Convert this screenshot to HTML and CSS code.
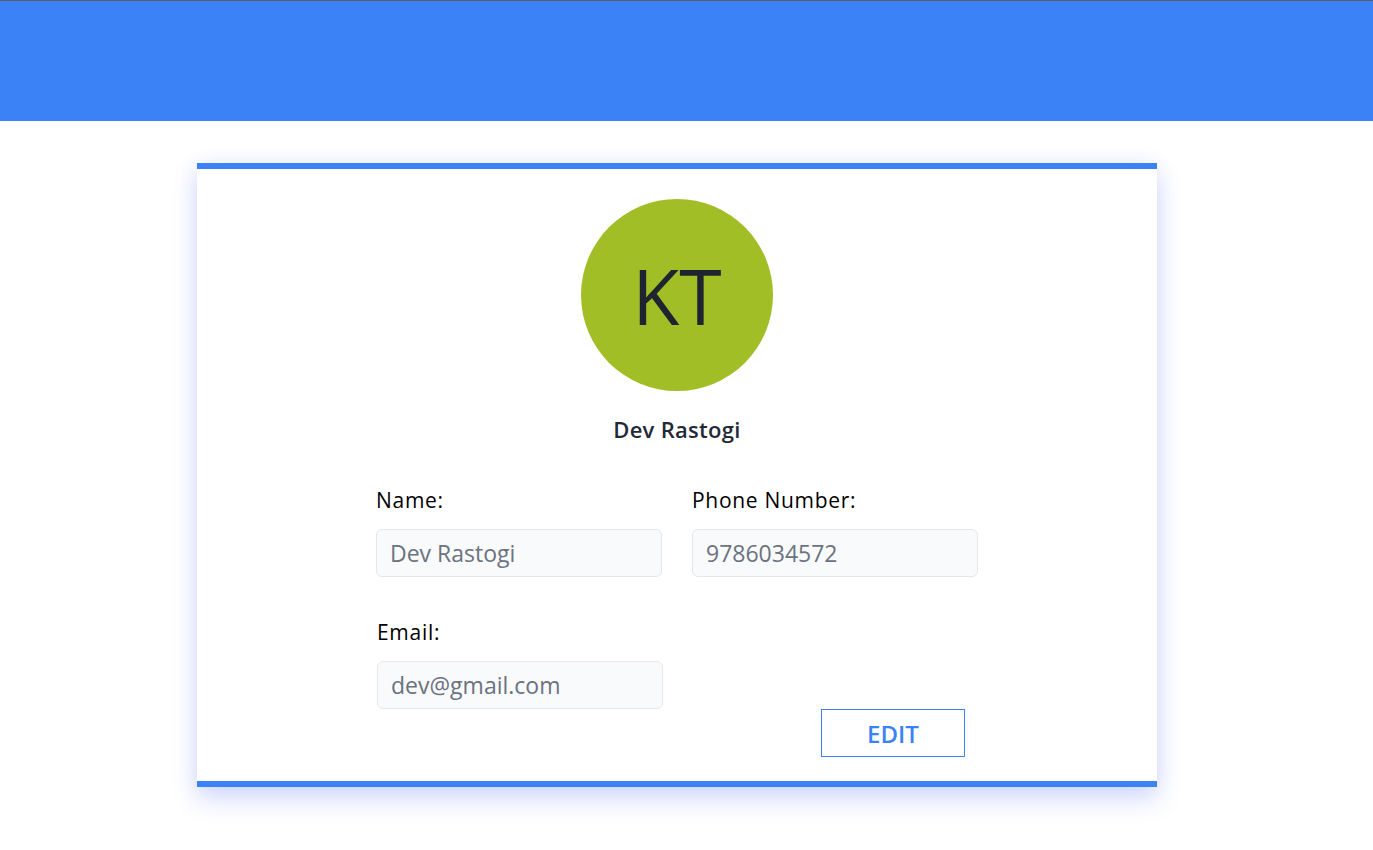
FILE: index.html
```html
<!DOCTYPE html>
<html lang="en">
<head>
<meta charset="utf-8">
<title>Profile</title>
<link rel="stylesheet" href="styles.css">
</head>
<body>
<header class="topbar"></header>
<main class="page">
  <section class="card">
    <div class="avatar">KT</div>
    <h2 class="user-name">Dev Rastogi</h2>
    <form class="form">
      <div class="field">
        <label class="label">Name:</label>
        <input class="input" type="text" placeholder="Dev Rastogi">
      </div>
      <div class="field">
        <label class="label">Phone Number:</label>
        <input class="input" type="text" placeholder="9786034572">
      </div>
      <div class="field field-email">
        <label class="label">Email:</label>
        <input class="input" type="text" placeholder="dev@gmail.com">
      </div>
    </form>
    <div class="actions">
      <button class="edit-btn" type="button">EDIT</button>
    </div>
  </section>
</main>
</body>
</html>
```

FILE: styles.css
```css
* { box-sizing: border-box; }

html, body {
  margin: 0;
  padding: 0;
  background: #ffffff;
  font-family: "Open Sans", "Noto Sans", "Liberation Sans", sans-serif;
  color: #000;
}

.topbar {
  height: 121px;
  background: #3b82f6;
  border-top: 1px solid #5b5e66;
}

.page {
  display: flex;
  justify-content: center;
  padding: 42px 19px 60px 0;
}

.card {
  width: 960px;
  background: #fff;
  border-top: 6px solid #3b82f6;
  border-bottom: 6px solid #3b82f6;
  box-shadow: 0 12px 24px rgba(70, 90, 240, 0.22), 0 0 18px rgba(70, 90, 240, 0.08);
  padding: 30px 0 24px;
  display: flex;
  flex-direction: column;
  align-items: center;
}

.avatar {
  width: 192px;
  height: 192px;
  border-radius: 50%;
  background: #a2be27;
  color: #1e2430;
  font-size: 77px;
  font-weight: 500;
  display: flex;
  align-items: center;
  justify-content: center;
  line-height: 1;
}

.user-name {
  margin: 24px 0 0;
  font-size: 22px;
  line-height: 28px;
  font-weight: 600;
  letter-spacing: 0.3px;
  color: #1f2937;
}

.form {
  margin-top: 45px;
  width: 602px;
  display: grid;
  grid-template-columns: 286px 286px;
  column-gap: 30px;
  row-gap: 43px;
}

.field {
  display: flex;
  flex-direction: column;
  gap: 17px;
}

.field-email { padding-left: 1px; }

.label {
  font-size: 21px;
  line-height: 24px;
  letter-spacing: 0.7px;
  color: #000;
}

.input {
  width: 286px;
  height: 48px;
  border: 1px solid #e5e7eb;
  border-radius: 6px;
  background: #f9fafb;
  padding: 0 13px;
  font-family: inherit;
  font-size: 23px;
  color: #6b7280;
  outline: none;
}

.input::placeholder { color: #6b7280; opacity: 1; }

.actions {
  width: 602px;
  display: flex;
  justify-content: flex-end;
  padding-right: 13px;
}

.edit-btn {
  width: 144px;
  height: 48px;
  background: #fff;
  border: 1px solid #3b82f6;
  color: #3b82f6;
  font-family: inherit;
  font-size: 24px;
  font-weight: 600;
  cursor: pointer;
}
```
